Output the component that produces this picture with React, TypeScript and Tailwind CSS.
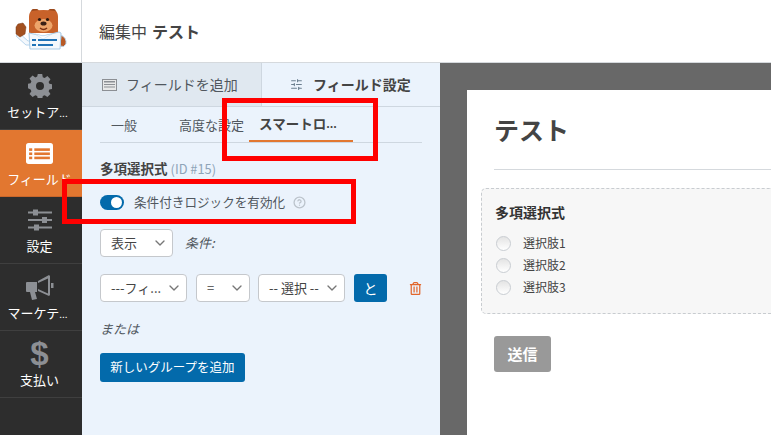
import { ChevronDown, CircleHelp, SlidersHorizontal } from "lucide-react";
import { FaRegTrashAlt } from "react-icons/fa";
import type { ReactNode } from "react";

const font = { fontFamily: '"Noto Sans CJK JP", "Noto Sans", sans-serif' };

const Bear = () => (
  <svg width="52" height="41" viewBox="0 0 52 41" className="mb-[4px]">
    <circle cx="20" cy="4" r="4.500" fill="#9c4a1d" />
    <circle cx="37" cy="4" r="4.500" fill="#9c4a1d" />
    <path d="M17 2 Q28.500 0 40 2 Q43 3 43 8 L43 24 L14 24 L14 8 Q14 3 17 2 Z" fill="#c8622a" />
    <ellipse cx="28.500" cy="16.500" rx="9" ry="6.500" fill="#eda56a" />
    <circle cx="24.500" cy="10.500" r="1.600" fill="#2b1a10" />
    <circle cx="32.500" cy="10.500" r="1.600" fill="#2b1a10" />
    <ellipse cx="28.500" cy="14.500" rx="3" ry="2" fill="#3a2015" />
    <path d="M25 19 Q28.500 22 32 19" stroke="#7a2f12" strokeWidth="1.500" fill="none" />
    <path d="M46 26 Q52 29 51 35 Q49 39 45 37 Z" fill="#b85a26" stroke="#b9d6ee" />
    <path d="M4 24 L13 32 L18 32 L18 36 L11 36 L1 27 Z" fill="#f4f8fc" stroke="#b9d6ee" />
    <path d="M1 18 L3 15 L8 14 L11 18 L10 25 L5 28 L1 25 Z" fill="#a3501f" stroke="#7a3a18" strokeWidth="0.500" />
    <path d="M14 24 L28 27 L44 23 L46 24 L45 40 L15 40 Z" fill="#f4f8fc" stroke="#a9cbe6" />
    <path d="M20 25 L28 30 L37 25 L28 27 Z" fill="#ffffff" stroke="#b9d6ee" strokeWidth="0.500" />
    <rect x="17" y="30" width="4" height="2" fill="#1f73b7" />
    <rect x="23" y="30" width="19" height="2" fill="#1f73b7" />
    <rect x="17" y="35" width="4" height="2" fill="#1f73b7" />
    <rect x="23" y="35" width="15" height="2" fill="#1f73b7" />
  </svg>
);

const Gear = () => (
  <svg width="24" height="24" viewBox="0 0 24 24" fill="#8c8f94">
    <path
      fillRule="evenodd"
      d="M9.800 0h4.400l.6 3.200 1.900.8 2.700-1.900 3.100 3.100-1.900 2.700.8 1.900 3.200.6v4.400l-3.200.6-.8 1.900 1.900 2.700-3.100 3.100-2.700-1.900-1.900.8-.6 3.200H9.800l-.6-3.200-1.900-.8-2.700 1.900-3.100-3.100 1.900-2.700-.8-1.900L-.6 14V9.800l3.200-.6.8-1.900L1.500 4.600l3.100-3.100 2.700 1.900 1.900-.8zM12 8a4 4 0 100 8 4 4 0 000-8z"
    />
  </svg>
);

const FieldsIcon = () => (
  <svg width="27" height="21" viewBox="0 0 26 20">
    <rect width="26" height="20" rx="2.500" fill="#ffffff" />
    <g fill="#e27730">
      <rect x="3" y="5" width="3" height="2.500" />
      <rect x="8" y="5" width="15" height="2.500" />
      <rect x="3" y="9" width="3" height="2.500" />
      <rect x="8" y="9" width="15" height="2.500" />
      <rect x="3" y="13" width="3" height="2.500" />
      <rect x="8" y="13" width="15" height="2.500" />
    </g>
  </svg>
);

const SettingsIcon = () => (
  <svg width="24" height="24" viewBox="0 0 24 24" fill="#8c8f94">
    <rect x="0" y="3.500" width="24" height="2" />
    <rect x="0" y="11" width="24" height="2" />
    <rect x="0" y="18.500" width="24" height="2" />
    <rect x="5" y="1.500" width="5" height="6" />
    <rect x="14" y="9" width="5" height="6" />
    <rect x="6" y="16.500" width="5" height="6" />
  </svg>
);

const Megaphone = () => (
  <svg width="28" height="25" viewBox="0 0 28 25" fill="#8c8f94">
    <path d="M0 8 Q0 7 1 7 L11 7 L11 17 L9 17 L11 24 L6 25 L4 17 L1 17 Q0 17 0 16 Z" />
    <path d="M12 6 L23 0 L24 1 L24 20 L23 21 L12 16 L12 14 L22 18.500 L22 3.500 L12 8 Z" />
    <rect x="25" y="8" width="2.500" height="5" />
  </svg>
);

const Dollar = () => (
  <span className="text-[33px] leading-[30px] font-bold text-[#8c8f94]" style={{ fontFamily: '"Liberation Sans", sans-serif' }}>
    $
  </span>
);

const NavItem = ({ icon, label, dots, active }: { icon: ReactNode; label: string; dots?: boolean; active?: boolean }) => (
  <div
    className={`h-[67px] flex flex-col items-center justify-start pt-[10px] pr-[3px] text-[13px] leading-[19px] text-white border-b border-[#3f3f3f] ${
      active ? "bg-[#e27730] border-[#c9662a]" : ""
    }`}
  >
    <div className="h-[26px] flex items-center justify-center">{icon}</div>
    <div className={`mt-[3px] whitespace-nowrap ${dots ? "-ml-[4px]" : ""}`}>
      {label}
      {dots && <span className="text-[10px]">...</span>}
    </div>
  </div>
);

const Select = ({ label, className }: { label: string; className: string }) => (
  <div className={`h-[28px] flex items-center justify-between pl-[10px] pr-[4px] bg-white border border-[#c5c8cc] rounded-[4px] text-[13px] text-[#444444] ${className}`}>
    <span className="whitespace-nowrap">{label}</span>
    <ChevronDown size={16} className="text-[#777777] shrink-0" />
  </div>
);

const Choice = ({ label }: { label: string }) => (
  <div className="h-[22px] flex items-center">
    <span className="w-[15px] h-[15px] rounded-full border border-[#c9cdd2] bg-gradient-to-b from-[#e4e4e4] to-white" />
    <span className="ml-[12px] text-[12px] text-[#444444]">{label}</span>
  </div>
);

export default function App() {
  return (
    <div className="relative w-[771px] h-[435px] overflow-hidden flex flex-col bg-white" style={font}>
      <header className="h-[63px] shrink-0 flex bg-white border-b border-[#d5d9dd]">
        <div className="w-[82px] flex items-center justify-center border-r border-[#d5d9dd]">
          <Bear />
        </div>
        <div className="pl-[17px] flex items-center text-[16px] text-[#444444]">
          編集中<span className="ml-[5px] font-bold">テスト</span>
        </div>
      </header>

      <div className="flex flex-1 min-h-0">
        <nav className="w-[82px] shrink-0 bg-[#2d2d2d]">
          <NavItem icon={<Gear />} label="セットア" dots />
          <NavItem icon={<FieldsIcon />} label="フィールド" active />
          <NavItem icon={<SettingsIcon />} label="設定" />
          <NavItem icon={<Megaphone />} label="マーケテ" dots />
          <NavItem icon={<Dollar />} label="支払い" />
        </nav>

        <aside className="w-[358px] shrink-0 bg-[#ebf3fc]">
          <div className="h-[44px] flex border-b border-[#ced7e0]">
            <div className="w-[180px] flex items-center pl-[20px] bg-[#e0e8f0] border-r border-[#ced7e0] text-[14px] text-[#50575e]">
              <svg width="15" height="12" viewBox="0 0 15 12" className="mr-[9px]">
                <rect x="0.500" y="0.500" width="14" height="11" fill="#e8e8e8" stroke="#8c8f94" />
                <rect x="2" y="2" width="11" height="1.500" fill="#8c8f94" />
                <rect x="2" y="5" width="11" height="1" fill="#8c8f94" />
                <rect x="2" y="7.500" width="11" height="1" fill="#8c8f94" />
              </svg>
              フィールドを追加
            </div>
            <div className="flex-1 flex items-center pl-[28px] text-[14px] font-bold text-[#444444]">
              <SlidersHorizontal size={13} className="mr-[10px] text-[#6b7f8f]" />
              フィールド設定
            </div>
          </div>

          <div className="px-[18px]">
            <div className="h-[36px] flex items-stretch border-b border-[#ced7e0] text-[13px] text-[#50575e]">
              <div className="ml-[11px] flex items-center">一般</div>
              <div className="ml-[42px] flex items-center whitespace-nowrap">高度な設定</div>
              <div className="ml-[5px] w-[104px] flex items-center pl-[10px] font-bold text-[#444444] border-b-2 border-[#e27730] text-[13.500px] whitespace-nowrap">
                スマートロ<span className="text-[11px]">...</span>
              </div>
            </div>

            <div className="mt-[15px] text-[13.500px] leading-[20px] font-bold text-[#444444]">
              多項選択式 <span className="font-normal text-[12.800px] text-[#8ea4b8]">(ID #15)</span>
            </div>

            <div className="mt-[12px] h-[22px] flex items-center text-[12.600px] text-[#50575e]">
              <span className="relative w-[24px] h-[15px] rounded-full bg-[#036aab]">
                <span className="absolute right-[2px] top-[2px] w-[11px] h-[11px] rounded-full bg-white" />
              </span>
              <span className="ml-[10px]">条件付きロジックを有効化</span>
              <CircleHelp size={13} strokeWidth={2.400} className="ml-[8px] text-[#bcc4cc]" />
            </div>

            <div className="mt-[16px] flex items-center">
              <Select label="表示" className="w-[73px]" />
              <span className="ml-[12px] italic text-[13px] text-[#50575e]">条件:</span>
            </div>

            <div className="mt-[17px] flex items-center">
              <Select label="---フィ..." className="w-[87px]" />
              <Select label="=" className="w-[54px] ml-[9px]" />
              <Select label="-- 選択 --" className="w-[87px] ml-[8px]" />
              <div className="ml-[9px] w-[33px] h-[28px] rounded-[3px] bg-[#036aab] flex items-center justify-center text-[14px] text-white">と</div>
              <FaRegTrashAlt size={13} className="ml-[22px] text-[#e2662b]" />
            </div>

            <div className="mt-[17px] italic text-[13px] leading-[20px] text-[#50575e]">または</div>

            <div className="mt-[14px] w-[145px] h-[29px] rounded-[3px] bg-[#036aab] flex items-center justify-center text-[12.500px] text-white whitespace-nowrap">
              新しいグループを追加
            </div>
          </div>
        </aside>

        <main className="flex-1 min-w-0 bg-[#686868] pt-[27px] pl-[27px]">
          <div className="h-[400px] bg-white pl-[14px]">
            <div className="ml-[13px] pt-[21px] h-[80px] border-b border-[#d5d9dd] text-[25px] leading-[36px] font-bold text-[#444444]">
              テスト
            </div>
            <div className="mt-[18px] h-[126px] bg-[#f7f7f7] border border-dashed border-r-0 border-[#c8ccd0] rounded-l-[5px] pl-[14px] pt-[13px]">
              <div className="-ml-[1px] text-[14px] leading-[20px] font-bold text-[#333333] mb-[10px]">多項選択式</div>
              <Choice label="選択肢1" />
              <Choice label="選択肢2" />
              <Choice label="選択肢3" />
            </div>
            <div className="ml-[13px] mt-[22px] w-[57px] h-[36px] rounded-[3px] bg-[#999999] flex items-center justify-center text-[15px] font-bold text-white">
              送信
            </div>
          </div>
        </main>
      </div>

      {/* red annotation boxes */}
      <div className="absolute left-[222px] top-[98px] w-[156px] h-[63px] border-[5px] border-[#ff0000]" />
      <div className="absolute left-[62px] top-[179px] w-[294px] h-[45px] border-[5px] border-[#ff0000]" />
    </div>
  );
}
